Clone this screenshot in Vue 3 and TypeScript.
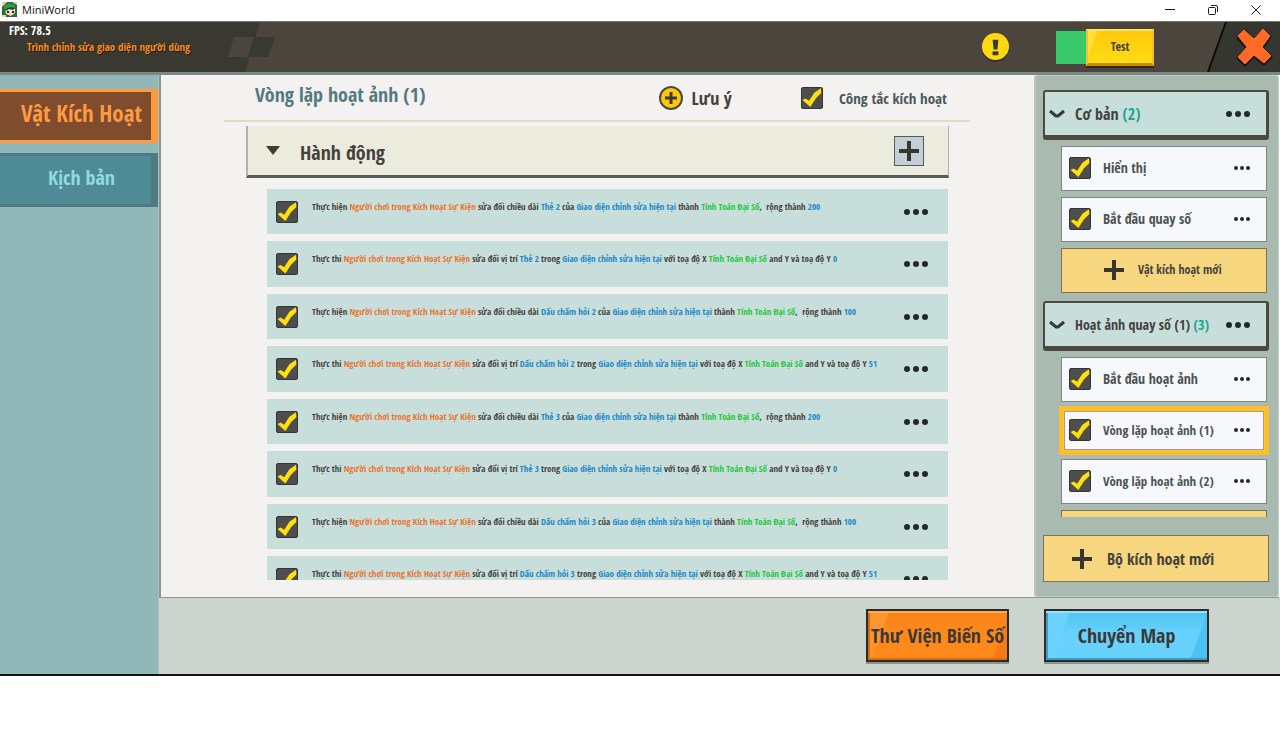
<script setup lang="ts">
import { reactive, ref } from 'vue'

type Tone = 'who' | 'ref' | 'fn'
interface Part {
  text: string
  tone?: Tone
}
interface Action {
  on: boolean
  parts: Part[]
}
interface Trigger {
  name: string
  on: boolean
  small?: boolean
}
interface Group {
  name: string
  count: number
  long?: boolean
  triggers: Trigger[]
}

const who: Part = { text: 'Người chơi trong Kích Hoạt Sự Kiện', tone: 'who' }
const screen: Part = { text: 'Giao diện chỉnh sửa hiện tại', tone: 'ref' }
const algebra: Part = { text: 'Tính Toán Đại Số', tone: 'fn' }

function resize(target: string, width: number): Action {
  return {
    on: true,
    parts: [
      { text: 'Thực hiện ' }, who, { text: ' sửa đổi chiều dài ' }, { text: target, tone: 'ref' },
      { text: ' của ' }, screen, { text: ' thành ' }, algebra, { text: ',\u2002rộng thành ' },
      { text: String(width), tone: 'ref' },
    ],
  }
}

function move(target: string, y: number): Action {
  return {
    on: true,
    parts: [
      { text: 'Thực thi ' }, who, { text: ' sửa đổi vị trí ' }, { text: target, tone: 'ref' },
      { text: ' trong ' }, screen, { text: ' với toạ độ X ' }, algebra, { text: ' and Y và toạ độ Y ' },
      { text: String(y), tone: 'ref' },
    ],
  }
}

const actions = reactive<Action[]>([
  resize('Thẻ 2', 200),
  move('Thẻ 2', 0),
  resize('Dấu chấm hỏi 2', 100),
  move('Dấu chấm hỏi 2', 51),
  resize('Thẻ 3', 200),
  move('Thẻ 3', 0),
  resize('Dấu chấm hỏi 3', 100),
  move('Dấu chấm hỏi 3', 51),
])

const groups = reactive<Group[]>([
  {
    name: 'Cơ bản',
    count: 2,
    triggers: [
      { name: 'Hiển thị', on: true },
      { name: 'Bắt đầu quay số', on: true },
    ],
  },
  {
    name: 'Hoạt ảnh quay số (1)',
    count: 3,
    long: true,
    triggers: [
      { name: 'Bắt đầu hoạt ảnh', on: true },
      { name: 'Vòng lặp hoạt ảnh (1)', on: true, small: true },
      { name: 'Vòng lặp hoạt ảnh (2)', on: true, small: true },
    ],
  },
])

const enabled = ref(true)
const selected = ref('Vòng lặp hoạt ảnh (1)')
const tabs: string[] = ['Vật Kích Hoạt', 'Kịch bản']
const tab = ref(tabs[0])
</script>

<template>
  <div class="app">
    <div class="titlebar">
      <svg class="logo" viewBox="0 0 15 15" aria-hidden="true">
        <rect width="15" height="15" fill="#2c6b3c" />
        <path d="M0 0h5L0 5zM10 0h5v3zM0 13h4v2H0z" fill="#e8d98a" />
        <path d="M2 4l5-3 6 2v3L8 5 3 8z" fill="#2f9a55" />
        <path d="M3 7l5-2 5 2v4l-4 3-5-2z" fill="#f3dcb9" />
        <path d="M3 7l5-2 5 1-2 2-4-1-3 2z" fill="#174a2d" />
        <rect x="5" y="9" width="2" height="2" fill="#33261c" />
        <rect x="10" y="9" width="2" height="2" fill="#33261c" />
      </svg>
      <span class="app-name">MiniWorld</span>
      <div class="window-controls">
        <button type="button" aria-label="Minimize">
          <svg viewBox="0 0 12 12"><path d="M1 5.500h10" /></svg>
        </button>
        <button type="button" aria-label="Restore">
          <svg viewBox="0 0 12 12"><rect x="1.500" y="3.500" width="7" height="7" rx="1" /><path d="M4 1.500h5a1.500 1.500 0 0 1 1.500 1.500v5" /></svg>
        </button>
        <button type="button" aria-label="Close">
          <svg viewBox="0 0 12 12"><path d="M1.500 1.500l9 9M10.500 1.500l-9 9" /></svg>
        </button>
      </div>
    </div>

    <header class="header">
      <div class="brand">
        <div class="fps">FPS: 78.5</div>
        <div class="subtitle">Trình chỉnh sửa giao diện người dùng</div>
      </div>
      <svg class="checker" viewBox="0 0 56 50" aria-hidden="true">
        <path d="M0 0h40L25 50H0z" fill="#393831" />
        <path d="M14 15h20l-6 20H8z" fill="#4c453e" />
        <path d="M34 15h21l-7 20H28z" fill="#393831" />
      </svg>
      <div class="header-tools">
        <button type="button" class="alert" aria-label="Alert">
          <svg viewBox="0 0 30 30">
            <circle cx="15" cy="16" r="14" fill="#34312b" />
            <circle cx="15" cy="14" r="14" fill="#ffd811" />
            <path d="M12 7h6l-1 10h-4z" fill="#393831" />
            <rect x="12" y="19" width="6" height="4" fill="#393831" />
          </svg>
        </button>
        <div class="test">
          <span class="lamp"></span>
          <button type="button" class="test-button">Test</button>
        </div>
        <button type="button" class="exit" aria-label="Exit">
          <svg viewBox="0 0 76 50">
            <path d="M22 0H76V50H4z" fill="#363630" />
            <path d="M22 0L4 50" stroke="#0d0d0b" stroke-width="2" />
            <path d="M34 16l7-7 9 9 9-10 7 7-8 11 9 9-7 7-10-8-9 9-7-7 9-10z" fill="#191814" stroke="#191814" stroke-width="3" stroke-linejoin="round" />
            <path d="M34 14l6-6 10 9 9-10 7 7-8 11 9 9-7 7-10-8-9 9-7-7 9-10z" fill="#ff6b26" stroke="#ff6b26" stroke-linejoin="round" />
          </svg>
        </button>
      </div>
    </header>

    <div class="body">
      <nav class="sidebar">
        <button
          v-for="name in tabs"
          :key="name"
          type="button"
          class="tab"
          :class="{ active: tab === name }"
          @click="tab = name"
        >
          {{ name }}
        </button>
      </nav>

      <div class="workspace">
        <div class="panels">
          <main class="editor">
            <div class="editor-head">
              <h1>Vòng lặp hoạt ảnh (1)</h1>
              <button type="button" class="note">
                <svg viewBox="0 0 26 26" aria-hidden="true">
                  <circle cx="13" cy="13" r="11" fill="#ffc70a" stroke="#4b4a42" stroke-width="2" />
                  <path d="M13 7v12M7 13h12" stroke="#3b3a30" stroke-width="3" />
                </svg>
                Lưu ý
              </button>
              <label class="switch">
                <input v-model="enabled" type="checkbox" class="check" />
                Công tắc kích hoạt
              </label>
            </div>

            <section class="actions">
              <div class="section-head">
                <svg class="caret" viewBox="0 0 14 9" aria-hidden="true"><path d="M0 0h14L7 9z" fill="#423d33" /></svg>
                <h2>Hành động</h2>
                <button type="button" class="add" aria-label="Thêm">
                  <svg viewBox="0 0 20 20"><path d="M10 0v20M0 10h20" stroke="#38362f" stroke-width="4" /></svg>
                </button>
              </div>
              <ul class="action-list">
                <li v-for="(action, i) in actions" :key="i" class="action">
                  <input v-model="action.on" type="checkbox" class="check" :aria-labelledby="`action-${i}`" />
                  <p :id="`action-${i}`"><span v-for="(part, j) in action.parts" :key="j" :class="part.tone">{{ part.text }}</span></p>
                  <button type="button" class="more large" aria-label="Tùy chọn">
                    <svg viewBox="0 0 25 6"><circle cx="3" cy="3" r="3" /><circle cx="12" cy="3" r="3" /><circle cx="21" cy="3" r="3" /></svg>
                  </button>
                </li>
              </ul>
            </section>
          </main>

          <aside class="triggers">
            <div class="groups">
              <section v-for="group in groups" :key="group.name" class="group">
                <div class="group-head" :class="{ long: group.long }">
                  <svg class="chevron" viewBox="0 0 16 10" aria-hidden="true"><path d="M1 2l6 5h2l6-5" /></svg>
                  <h3>{{ group.name }} <span>({{ group.count }})</span></h3>
                  <button type="button" class="more large" aria-label="Tùy chọn">
                    <svg viewBox="0 0 25 6"><circle cx="3" cy="3" r="3" /><circle cx="12" cy="3" r="3" /><circle cx="21" cy="3" r="3" /></svg>
                  </button>
                </div>
                <div
                  v-for="item in group.triggers"
                  :key="item.name"
                  class="trigger"
                  :class="{ selected: item.name === selected, small: item.small }"
                >
                  <label>
                    <input v-model="item.on" type="checkbox" class="check" />
                    {{ item.name }}
                  </label>
                  <button type="button" class="more" aria-label="Tùy chọn" @click="selected = item.name">
                    <svg viewBox="0 0 16 4"><circle cx="2" cy="2" r="2" /><circle cx="8" cy="2" r="2" /><circle cx="14" cy="2" r="2" /></svg>
                  </button>
                </div>
                <button type="button" class="new-trigger">
                  <svg viewBox="0 0 20 20" aria-hidden="true"><path d="M10 0v20M0 10h20" /></svg>
                  Vật kích hoạt mới
                </button>
              </section>
            </div>
            <button type="button" class="new-group">
              <svg viewBox="0 0 20 20" aria-hidden="true"><path d="M10 0v20M0 10h20" /></svg>
              Bộ kích hoạt mới
            </button>
          </aside>
        </div>

        <footer class="footer">
          <button type="button" class="big orange">Thư Viện Biến Số</button>
          <button type="button" class="big blue">Chuyển Map</button>
        </footer>
      </div>
    </div>
  </div>
</template>

<style>
body {
  background: #fff;
}
</style>

<style scoped>
* {
  box-sizing: border-box;
}

.app {
  display: flex;
  flex-direction: column;
  height: calc(100vh - 75px);
  min-height: 480px;
  border-bottom: 2px solid #15120f;
  font-family: 'Open Sans Condensed', 'Roboto Condensed', 'Open Sans', sans-serif;
  font-weight: 700;
  color: #44423c;
}

button {
  margin: 0;
  padding: 0;
  border: 0;
  background: none;
  font: inherit;
  color: inherit;
  cursor: pointer;
}

h1,
h2,
h3,
p,
ul {
  margin: 0;
  padding: 0;
}

svg {
  display: block;
}

.titlebar {
  display: flex;
  align-items: center;
  flex: none;
  height: 22px;
  padding: 0 18px 2px 2px;
  border-bottom: 1px solid #77756f;
  background: #fff;
}

.logo {
  width: 15px;
  height: 15px;
}

.app-name {
  flex: 1;
  margin-left: 5px;
  font: 11px 'Open Sans', sans-serif;
  color: #111;
}

.window-controls {
  display: flex;
  gap: 31px;
}

.window-controls svg {
  width: 12px;
  height: 12px;
  fill: none;
  stroke: #1c1c1c;
}

.header {
  display: flex;
  flex: none;
  height: 53px;
  border-bottom: 3px solid #7b8a81;
  background: #4c453e;
}

.brand {
  width: 220px;
  padding: 0 0 0 9px;
  background: #393831;
}

.fps {
  font-size: 12px;
  line-height: 18px;
  color: #fff;
}

.subtitle {
  padding-left: 18px;
  font-size: 11px;
  line-height: 14px;
  color: #f98a1f;
  text-shadow: 1px 1px #1e1c18;
  white-space: nowrap;
}

.checker {
  width: 56px;
  height: 50px;
}

.header-tools {
  display: flex;
  align-items: center;
  margin-left: auto;
}

.alert {
  margin-right: 46px;
}

.alert svg {
  width: 29px;
  height: 29px;
}

.test {
  display: flex;
  align-items: center;
  margin-right: 50px;
}

.lamp {
  width: 30px;
  height: 33px;
  background: #37c96a;
}

.test-button {
  width: 68px;
  height: 37px;
  border: 2px solid #f5bd36;
  border-top-color: #ffe16b;
  border-bottom: 3px solid #c98a0c;
  background: linear-gradient(110deg, #ffe033 12%, transparent 13%), linear-gradient(#ffc90c, #ffdc14);
  box-shadow: 0 2px #2f2b26;
  font-size: 12px;
}

.exit svg {
  width: 76px;
  height: 50px;
}

.body {
  display: flex;
  flex: 1;
  min-height: 0;
}

.sidebar {
  display: flex;
  flex-direction: column;
  gap: 10px;
  width: 159px;
  padding-top: 14px;
  border-right: 1px solid #a9c2c0;
  background: #92b7b9;
}

.tab {
  height: 54px;
  padding: 0 0 6px 12px;
  border: solid #507a83;
  border-width: 3px 7px 3px 0;
  background: #4f8b97;
  color: #92dae2;
  font-size: 20px;
}

.tab.active {
  border-color: #ff9a3f;
  background: #7f4c2d;
  color: #ff9a42;
  font-size: 23px;
}

.workspace {
  display: flex;
  flex: 1;
  flex-direction: column;
  min-width: 0;
}

.panels {
  display: flex;
  flex: 1;
  min-height: 0;
  margin-right: 1px;
  border: solid #8d9691;
  border-width: 0 0 1px 2px;
  background: #f4f2f1;
}

.editor {
  display: flex;
  flex: 1;
  flex-direction: column;
  min-width: 0;
  padding: 0 64px 17px 63px;
}

.editor-head {
  display: flex;
  align-items: center;
  height: 47px;
  padding: 0 23px 0 31px;
  border-bottom: 2px solid #d9ddc4;
}

h1 {
  flex: 1;
  padding-bottom: 6px;
  font-size: 20px;
  color: #557981;
}

.note {
  display: flex;
  align-items: center;
  gap: 8px;
  margin-right: 69px;
  font-size: 18px;
}

.note svg {
  width: 26px;
  height: 26px;
}

.switch {
  display: flex;
  align-items: center;
  gap: 16px;
  font-size: 15px;
  color: #4a575b;
}

.check {
  appearance: none;
  flex: none;
  width: 22px;
  height: 22px;
  margin: 0;
  border: 1px solid #343636;
  border-radius: 2px;
  background: #4e4f4d;
}

.check:checked::after {
  content: '';
  display: block;
  height: 100%;
  background: #ffe00c;
  clip-path: polygon(3% 62%, 18% 55%, 36% 66%, 62% 26%, 95% 4%, 97% 27%, 70% 54%, 42% 98%);
}

.actions {
  display: flex;
  flex: 1;
  flex-direction: column;
  min-height: 0;
  margin: 4px 21px 0 22px;
}

.section-head {
  display: flex;
  align-items: center;
  flex: none;
  height: 52px;
  padding: 0 24px 0 18px;
  border: solid #b5b0a4;
  border-width: 0 1px 3px 2px;
  border-bottom-color: #5c5b58;
  background: #ebecde;
}

.caret {
  width: 14px;
  height: 9px;
}

h2 {
  flex: 1;
  margin-left: 20px;
  padding-top: 4px;
  font-size: 20px;
}

.add {
  padding: 4px;
  border: 1px solid #55595a;
  background: #c2cfd5;
}

.add svg {
  width: 20px;
  height: 20px;
}

.action-list {
  display: grid;
  flex: 1;
  grid-auto-rows: 45px 46px;
  row-gap: 7px;
  min-height: 0;
  margin: 11px 1px 0 21px;
  overflow: hidden;
  list-style: none;
}

.action {
  display: flex;
  align-items: center;
  padding: 0 19px 0 9px;
  background: #c8dedb;
}

.action p {
  flex: 1;
  margin-left: 14px;
  padding-bottom: 10px;
  font-size: 9px;
  line-height: 12px;
  white-space: nowrap;
}

.who {
  color: #e8742f;
}

.ref {
  color: #2088c6;
}

.fn {
  color: #24c63c;
}

.more svg {
  width: 16px;
  height: 4px;
  fill: #23292b;
}

.more.large svg {
  width: 25px;
  height: 6px;
}

.triggers {
  display: flex;
  flex-direction: column;
  width: 245px;
  padding: 14px 9px 14px 7px;
  border: 1px solid #c0cdc2;
  border-left: 2px solid #b9c6bb;
  border-radius: 3px;
  background: #a9bbb0;
}

.groups {
  display: flex;
  flex: 1;
  flex-direction: column;
  gap: 8px;
  min-height: 0;
  overflow: hidden;
}

.group {
  display: flex;
  flex: none;
  flex-direction: column;
  gap: 6px;
}

.group-head {
  display: flex;
  align-items: center;
  height: 50px;
  padding: 0 15px 0 4px;
  border: 2px solid #4d4840;
  border-width: 2px 3px 5px 2px;
  border-radius: 3px;
  background: #c8dedb;
}

.chevron {
  width: 16px;
  height: 10px;
  fill: none;
  stroke: #3a3832;
  stroke-width: 3;
}

h3 {
  flex: 1;
  margin-left: 10px;
  font-size: 16px;
  white-space: nowrap;
}

.long h3 {
  font-size: 14px;
}

h3 span {
  color: #1da695;
}

.trigger {
  display: flex;
  align-items: center;
  height: 45px;
  margin: 0 2px 0 18px;
  padding: 0 16px 2px 7px;
  border: 1px solid #7d8884;
  background: #f7f8fb;
  font-size: 14px;
  color: #4a5355;
}

.trigger.small {
  font-size: 13px;
}

.trigger.selected {
  border-color: #ffc021;
  box-shadow: 0 0 0 2px #ffbb33, inset 0 0 0 2px #ffc424, inset 0 0 0 3px #a79d8c;
}

.trigger label {
  display: flex;
  flex: 1;
  align-items: center;
  gap: 12px;
}

.new-trigger,
.new-group {
  display: flex;
  align-items: center;
  border: 1px solid #7b7458;
  background: #f7d680;
}

.new-trigger {
  gap: 14px;
  height: 45px;
  margin: 0 2px 0 18px;
  padding: 0 0 2px 42px;
  font-size: 12px;
}

.new-group {
  flex: none;
  gap: 15px;
  height: 47px;
  margin-top: 18px;
  padding-left: 28px;
  font-size: 16px;
}

.new-trigger svg,
.new-group svg {
  width: 20px;
  height: 20px;
  stroke: #38362f;
  stroke-width: 4;
}

.footer {
  display: flex;
  gap: 35px;
  justify-content: flex-end;
  flex: none;
  padding: 11px 71px 12px;
  background: #cbd5cd;
}

.big {
  height: 53px;
  border: 2px solid #2c2b28;
  font-size: 20px;
  color: #3b3935;
}

.orange {
  width: 143px;
  background: linear-gradient(110deg, transparent 90%, #f97a12 91%), linear-gradient(110deg, #ff962d 13%, transparent 14%), linear-gradient(#fb8219, #ff8a1b 50%);
  box-shadow: inset 0 2px #ffab55, inset 2px -2px #d96b10, 0 2px #8b9590;
}

.blue {
  width: 165px;
  background: linear-gradient(110deg, transparent 90%, #4bc3f2 91%), linear-gradient(110deg, #6bd3fc 13%, transparent 14%), linear-gradient(#4fc4f2, #68d2fd 50%);
  box-shadow: inset 0 2px #92e2ff, inset 2px -2px #3e9cc4, 0 2px #8b9590;
}
</style>
